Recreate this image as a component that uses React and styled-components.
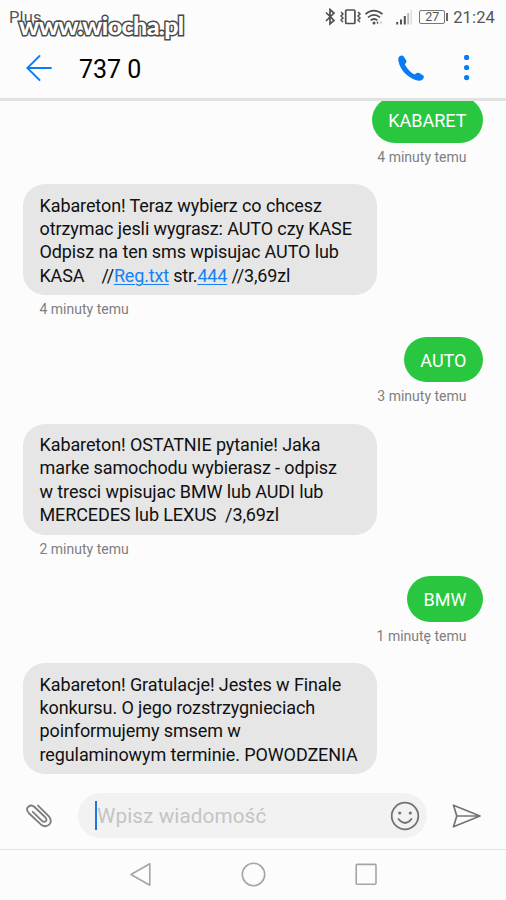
import React from 'react'
import styled, { createGlobalStyle } from 'styled-components'

const GlobalStyle = createGlobalStyle`
  body {
    margin: 0;
    background: #fcfcfc;
    font-family: Roboto, 'Liberation Sans', sans-serif;
  }

  svg {
    display: block;
  }
`

const Screen = styled.div`
  display: flex;
  flex-direction: column;
  position: relative;
  width: 506px;
  height: 900px;
  overflow: hidden;
  background: #fcfcfc;
`

const StatusBar = styled.div`
  display: flex;
  justify-content: space-between;
  align-items: center;
  flex: none;
  height: 34px;
  padding: 0 11px 0 9px;
  box-sizing: border-box;
  color: #555;
`

const Carrier = styled.span`
  font-size: 16.5px;
  letter-spacing: 0.2px;
`

const StatusIcons = styled.div`
  display: flex;
  align-items: center;
`

const Battery = styled.span`
  width: 24px;
  height: 12px;
  margin-left: 7px;
  border: 1px solid #777;
  border-radius: 2px;
  font-size: 12.5px;
  line-height: 12.5px;
  text-align: center;
`

const BatteryTip = styled.span`
  width: 2px;
  height: 8px;
  margin-left: 1px;
  background: #666;
`

const Clock = styled.span`
  margin-left: 5px;
  font-size: 16.5px;
  letter-spacing: 0.15px;
`

const Watermark = styled.span`
  position: absolute;
  top: 8px;
  left: 19px;
  color: #fff;
  font-family: Lato, 'Open Sans', sans-serif;
  font-size: 25px;
  font-weight: 900;
  line-height: 34px;
  letter-spacing: -0.6px;
  paint-order: stroke fill;
  -webkit-text-stroke: 3px #4a4a4a;
  stroke-linejoin: round;
`

const Header = styled.header`
  display: flex;
  align-items: center;
  flex: none;
  height: 67px;
  padding: 3px 36px 0 26px;
  border-bottom: 3px solid #e2e2e2;
  box-sizing: border-box;
`

const Title = styled.h1`
  flex: 1;
  margin: 4px 0 0 26px;
  color: #000;
  font-size: 25px;
  font-weight: 400;
  line-height: 30px;
`

const HeaderActions = styled.div`
  display: flex;
  align-items: center;
  gap: 40px;
`

const Thread = styled.main`
  display: flex;
  flex: none;
  flex-direction: column;
  height: 683px;
  overflow: hidden;
`

const Message = styled.div`
  display: flex;
  flex: none;
  flex-direction: column;
  align-items: ${props => (props.$sent ? 'flex-end' : 'flex-start')};
  height: ${props => (props.$sent ? '87px' : '152.5px')};
  padding: 0 23px;

  &:first-child {
    margin-top: -4px;
  }
`

const SentBubble = styled.div`
  height: 45.5px;
  padding: 0 16.5px;
  border-radius: 23px;
  background: #28c73f;
  color: #fff;
  font-size: 18px;
  line-height: 47px;
`

const ReceivedBubble = styled.div`
  width: 354px;
  height: 111px;
  padding: 9.5px 16.5px 0;
  border-radius: 22px;
  box-sizing: border-box;
  background: #e6e6e6;
  color: #111;
  font-size: 18px;
  line-height: 23.5px;
  letter-spacing: -0.1px;
  white-space: pre;
`

const Line = styled.div`
  height: 23.4px;
`

const LinkLine = styled(Line)`
  display: flex;
  letter-spacing: -0.18px;
`

const Link = styled.span`
  color: #1581f5;
  text-decoration: underline;
  text-decoration-thickness: 1px;
  text-underline-offset: 2px;
`

const Time = styled.time`
  margin: 6px 16.5px 0;
  color: #808080;
  font-size: 14px;
  line-height: 17px;
`

const Composer = styled.div`
  display: flex;
  align-items: center;
  flex: none;
  height: 66px;
  padding: 0 24px 2px 26px;
  border-bottom: 1px solid #e3e3e3;
  box-sizing: border-box;
`

const Field = styled.div`
  display: flex;
  align-items: center;
  justify-content: space-between;
  width: 349px;
  height: 45px;
  margin: 0 25px 0 26px;
  padding: 0 7px 0 17px;
  border-radius: 23px;
  box-sizing: border-box;
  background: #f2f2f2;
`

const Placeholder = styled.span`
  height: 29px;
  border-left: 2px solid #1d77dc;
  color: #c4c4c4;
  font-size: 20.7px;
  line-height: 31px;
  letter-spacing: 0.1px;
`

const NavBar = styled.nav`
  display: flex;
  align-items: center;
  justify-content: center;
  gap: 88px;
  flex: none;
  height: 49px;
`

const messages = [
  { sent: true, text: 'KABARET', time: '4 minuty temu' },
  {
    text: (
      <>
        <Line>Kabareton! Teraz wybierz co chcesz</Line>
        <Line>otrzymac jesli wygrasz: AUTO czy KASE</Line>
        <Line>Odpisz na ten sms wpisujac AUTO lub</Line>
        <LinkLine>
          <span>{'KASA    //'}</span>
          <Link>Reg.txt</Link>
          <span>{' str.'}</span>
          <Link>444</Link>
          <span>{' //3,69zl'}</span>
        </LinkLine>
      </>
    ),
    time: '4 minuty temu',
  },
  { sent: true, text: 'AUTO', time: '3 minuty temu' },
  {
    text: (
      <>
        <Line>Kabareton! OSTATNIE pytanie! Jaka</Line>
        <Line>marke samochodu wybierasz - odpisz</Line>
        <Line>w tresci wpisujac BMW lub AUDI lub</Line>
        <Line>{'MERCEDES lub LEXUS  /3,69zl'}</Line>
      </>
    ),
    time: '2 minuty temu',
  },
  { sent: true, text: 'BMW', time: '1 minutę temu' },
  {
    text: (
      <>
        <Line>Kabareton! Gratulacje! Jestes w Finale</Line>
        <Line>konkursu. O jego rozstrzygnieciach</Line>
        <Line>poinformujemy smsem w</Line>
        <Line>regulaminowym terminie. POWODZENIA</Line>
      </>
    ),
  },
]

const StatusGlyphs = () => (
  <svg width="87" height="18" viewBox="0 0 87 18" fill="none" stroke="#505050" strokeWidth="1.7">
    <path d="M1 4.5 9 12.5 5 16V1.5L9 5 1 13" />
    <rect x="20.7" y="2" width="9.2" height="13.5" rx="1" />
    <path d="m16 4 2 2-2 2 2 2-2 2 2 2M33 4l2 2-2 2 2 2-2 2 2 2" strokeWidth="1.5" />
    <path d="M40.5 6.2q8.2-7 17 0M43 9.4q6-5 12 0M45.6 12.4q3.4-2.8 6.8 0" />
    <circle cx="49" cy="15" r="1.5" fill="#505050" stroke="none" />
    <path d="M53.2 13v3.4L51.4 14.7Z" fill="#505050" stroke="none" />
    <path d="M55.4 12.8v3.4l1.8-1.7Z" fill="#bbb" stroke="none" />
    <path d="M72.2 14v2.5M76 11.5v5M79.8 8v8.5" strokeWidth="2" />
    <path d="M83.2 5v11.5" stroke="#bbb" strokeWidth="2" />
    <path d="M86.3 2v14.5" stroke="#ddd" strokeWidth="1.5" />
  </svg>
)

const BackIcon = () => (
  <svg width="27" height="26" viewBox="0 0 27 26" fill="none" stroke="#0a7cf5" strokeWidth="1.8" strokeLinecap="round">
    <path d="M13.5 1 1.3 13 13.5 25M1.3 13H25" />
  </svg>
)

const PhoneIcon = () => (
  <svg width="26" height="26" viewBox="0 0 26 26" fill="#087cf7">
    <path d="M1 1.8C3 .3 4.6.2 5.7 1.4L8 5q1.2 2-.8 3.8L6.8 9.4q4.5 7.6 9.8 10.2l1.3-1.1q1.5-1.4 3.3-.4l3.7 2.2q2 1.4-.1 3.9-2.1 2-5.3 1.4C10.2 23.2 2.2 15.5.4 6Q0 3 1 1.8Z" />
  </svg>
)

const MoreIcon = () => (
  <svg width="6" height="26" viewBox="0 0 6 26" fill="#087cf7">
    <circle cx="2.6" cy="2.4" r="2.6" />
    <circle cx="2.6" cy="12.5" r="2.6" />
    <circle cx="2.6" cy="22.6" r="2.6" />
  </svg>
)

const ClipIcon = () => (
  <svg width="26" height="24" viewBox="0 0 27 25" fill="none" stroke="#7d7d7d" strokeWidth="1.9" strokeLinecap="round" strokeLinejoin="round">
    <path d="M12.5 1.6 23.6 12.7Q27.6 17.4 24.3 21.3 20.1 25.1 15.4 21.3L3 9.6Q-.6 5.6 2.4 2.8 5.5.1 8.8 3.1L20 13.8Q22.1 16.1 20.7 17.8 18.7 19.6 16.4 17.3L7 8.2" />
  </svg>
)

const SmileIcon = () => (
  <svg width="30" height="30" viewBox="0 0 30 30" fill="none" stroke="#737373" strokeWidth="1.8" strokeLinecap="round">
    <circle cx="15" cy="15" r="13.3" />
    <path d="M8.5 18q6.5 8 13 0" />
    <circle cx="9.7" cy="12" r="1.6" fill="#737373" stroke="none" />
    <circle cx="20.3" cy="12" r="1.6" fill="#737373" stroke="none" />
  </svg>
)

const SendIcon = () => (
  <svg width="29" height="24" viewBox="0 0 29 24" fill="none" stroke="#747474" strokeWidth="1.7" strokeLinejoin="round">
    <path d="M1.5 1.2 28 12 1.5 22.8 4.8 12ZM4.8 12H28" />
  </svg>
)

export default () => (
  <Screen>
    <GlobalStyle />
    <StatusBar>
      <Carrier>Plus</Carrier>
      <StatusIcons>
        <StatusGlyphs />
        <Battery>27</Battery>
        <BatteryTip />
        <Clock>21:24</Clock>
      </StatusIcons>
    </StatusBar>
    <Watermark>www.wiocha.pl</Watermark>
    <Header>
      <BackIcon />
      <Title>737 0</Title>
      <HeaderActions>
        <PhoneIcon />
        <MoreIcon />
      </HeaderActions>
    </Header>
    <Thread>
      {messages.map((message, index) => {
        const Bubble = message.sent ? SentBubble : ReceivedBubble
        return (
          <Message key={index} $sent={message.sent}>
            <Bubble>{message.text}</Bubble>
            {message.time && <Time>{message.time}</Time>}
          </Message>
        )
      })}
    </Thread>
    <Composer>
      <ClipIcon />
      <Field>
        <Placeholder>Wpisz wiadomość</Placeholder>
        <SmileIcon />
      </Field>
      <SendIcon />
    </Composer>
    <NavBar>
      <svg width="25" height="25" viewBox="0 0 25 25" fill="none" stroke="#a5a5a5" strokeWidth="1.6" strokeLinejoin="round">
        <path d="M3 12.5 21.8 1.8V23.2Z" />
      </svg>
      <svg width="25" height="25" viewBox="0 0 25 25" fill="none" stroke="#a5a5a5" strokeWidth="1.6">
        <circle cx="12.5" cy="12.5" r="11.2" />
      </svg>
      <svg width="25" height="25" viewBox="0 0 25 25" fill="none" stroke="#a5a5a5" strokeWidth="1.6">
        <rect x="2.2" y="2.4" width="19.8" height="19.8" rx="1" />
      </svg>
    </NavBar>
  </Screen>
)
